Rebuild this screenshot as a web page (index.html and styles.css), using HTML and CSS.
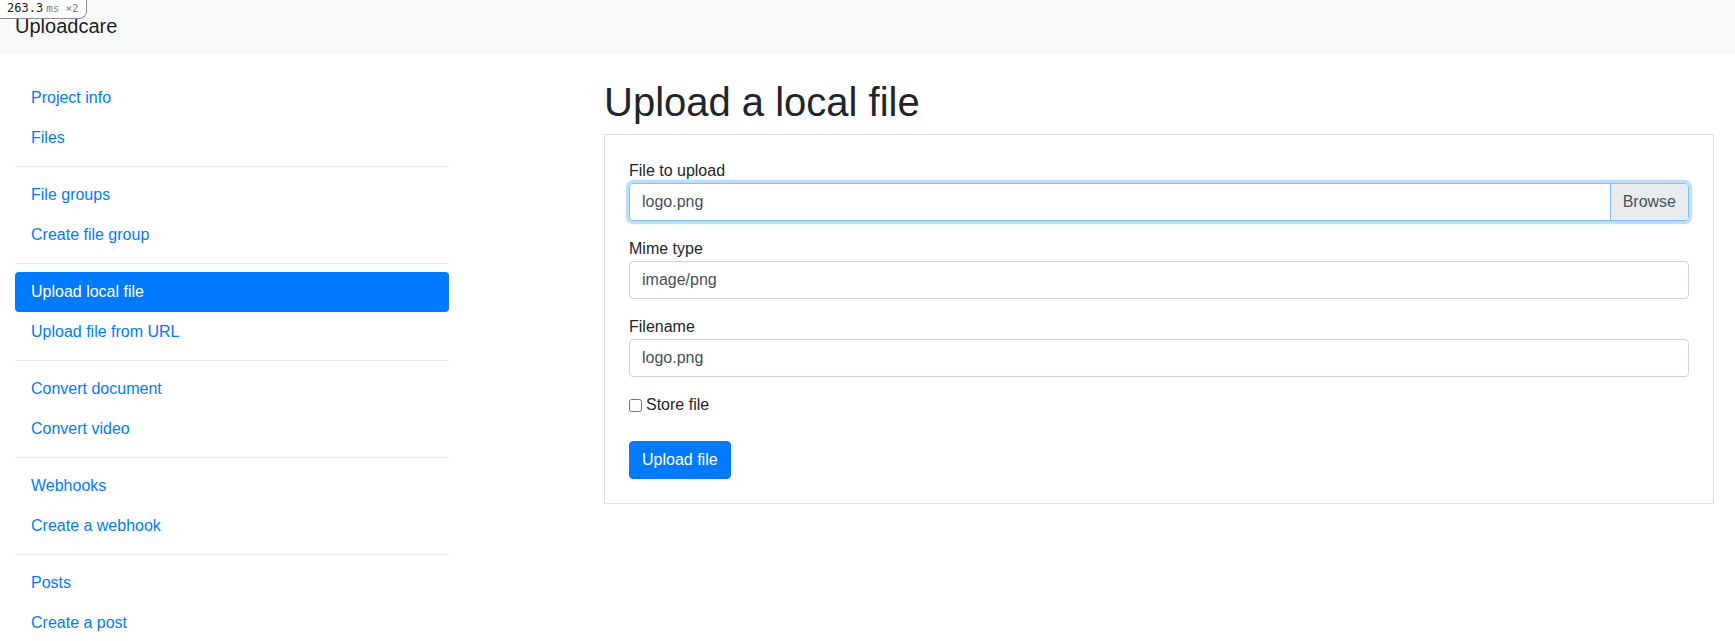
FILE: index.html
```html
<!DOCTYPE html>
<html lang="en">
<head>
<meta charset="utf-8">
<title>Upload a local file</title>
<link rel="stylesheet" href="styles.css">
</head>
<body>
<div class="perf-badge"><span class="perf-time">263.3</span><span class="perf-unit">ms</span><span class="perf-mult">×2</span></div>
<header class="navbar">
  <a class="brand" href="#">Uploadcare</a>
</header>
<div class="layout">
  <nav class="sidebar">
    <a class="nav-link" href="#">Project info</a>
    <a class="nav-link" href="#">Files</a>
    <div class="divider"></div>
    <a class="nav-link" href="#">File groups</a>
    <a class="nav-link" href="#">Create file group</a>
    <div class="divider"></div>
    <a class="nav-link active" href="#">Upload local file</a>
    <a class="nav-link" href="#">Upload file from URL</a>
    <div class="divider"></div>
    <a class="nav-link" href="#">Convert document</a>
    <a class="nav-link" href="#">Convert video</a>
    <div class="divider"></div>
    <a class="nav-link" href="#">Webhooks</a>
    <a class="nav-link" href="#">Create a webhook</a>
    <div class="divider"></div>
    <a class="nav-link" href="#">Posts</a>
    <a class="nav-link" href="#">Create a post</a>
  </nav>
  <main class="main">
    <h1 class="title">Upload a local file</h1>
    <div class="card">
      <form class="upload-form">
        <div class="form-group">
          <label class="form-label">File to upload</label>
          <div class="file-input">
            <span class="file-name">logo.png</span>
            <span class="file-browse">Browse</span>
          </div>
        </div>
        <div class="form-group">
          <label class="form-label" for="mime">Mime type</label>
          <input class="form-control" id="mime" type="text" value="image/png">
        </div>
        <div class="form-group">
          <label class="form-label" for="fname">Filename</label>
          <input class="form-control" id="fname" type="text" value="logo.png">
        </div>
        <div class="form-check">
          <input class="check-input" id="store" type="checkbox">
          <label class="check-label" for="store">Store file</label>
        </div>
        <button class="btn-primary" type="button">Upload file</button>
      </form>
    </div>
  </main>
</div>
</body>
</html>
```

FILE: styles.css
```css
html {
  overflow: hidden;
}

body {
  margin: 0;
  font-family: "Liberation Sans", Arial, sans-serif;
  font-size: 16px;
  line-height: 1.5;
  color: #212529;
  background: #fff;
}

.perf-badge {
  position: absolute;
  top: 0;
  left: 0;
  z-index: 10;
  display: flex;
  align-items: baseline;
  padding: 0 7px 1px 7px;
  background: #fff;
  border: 1px solid #8a8a8a;
  border-top: 0;
  border-left: 0;
  border-radius: 0 0 8px 0;
  font-family: "DejaVu Sans Mono", monospace;
  line-height: 16px;
}

.perf-time {
  font-size: 12px;
  color: #1a1a1a;
}

.perf-unit {
  font-size: 11px;
  color: #808080;
  margin-left: 3px;
}

.perf-mult {
  font-size: 11px;
  color: #808080;
  margin-left: 6px;
}

.navbar {
  height: 54px;
  box-sizing: border-box;
  padding: 11px 15px 0;
  background: #f8f9fa;
}

.brand {
  font-size: 20px;
  line-height: 30px;
  color: rgba(0, 0, 0, 0.9);
  text-decoration: none;
}

.layout {
  display: flex;
  align-items: flex-start;
  padding-top: 24px;
}

.sidebar {
  flex: none;
  width: 434px;
  margin-left: 15px;
  display: flex;
  flex-direction: column;
}

.nav-link {
  display: block;
  padding: 8px 16px;
  color: #007bff;
  text-decoration: none;
  border-radius: 4px;
}

.nav-link.active {
  background: #007bff;
  color: #fff;
}

.divider {
  height: 0;
  margin: 8px 0;
  border-top: 1px solid #e9ecef;
}

.main {
  flex: none;
  width: 1110px;
  margin-left: 155px;
}

.title {
  margin: 0 0 8px;
  font-size: 40px;
  font-weight: 500;
  line-height: 1.2;
  color: #212529;
}

.card {
  border: 1px solid rgba(0, 0, 0, 0.125);
  padding: 24px;
}

.form-group {
  margin-bottom: 16px;
}

.form-label {
  display: block;
  margin: 0;
}

.form-control {
  display: block;
  width: 100%;
  height: 38px;
  box-sizing: border-box;
  padding: 6px 12px;
  font-family: inherit;
  font-size: 16px;
  line-height: 1.5;
  color: #495057;
  background: #fff;
  border: 1px solid #ced4da;
  border-radius: 4px;
  margin: 0;
  outline: none;
}

.file-input {
  display: flex;
  height: 38px;
  box-sizing: border-box;
  border: 1px solid #80bdff;
  border-radius: 4px;
  box-shadow: 0 0 0 0.2rem rgba(0, 123, 255, 0.25);
  color: #495057;
  overflow: hidden;
}

.file-name {
  flex: 1;
  padding: 6px 12px;
  line-height: 24px;
}

.file-browse {
  flex: none;
  padding: 6px 12px;
  line-height: 24px;
  background: #e9ecef;
  border-left: 1px solid #80bdff;
}

.form-check {
  display: flex;
  align-items: center;
  height: 24px;
  margin-bottom: 24px;
}

.check-input {
  width: 13px;
  height: 13px;
  margin: 0 4px 0 0;
}

.check-label {
  line-height: 24px;
}

.btn-primary {
  display: inline-block;
  padding: 6px 12px;
  font-family: inherit;
  font-size: 16px;
  line-height: 1.5;
  color: #fff;
  background: #007bff;
  border: 1px solid #007bff;
  border-radius: 4px;
  cursor: pointer;
}
```
